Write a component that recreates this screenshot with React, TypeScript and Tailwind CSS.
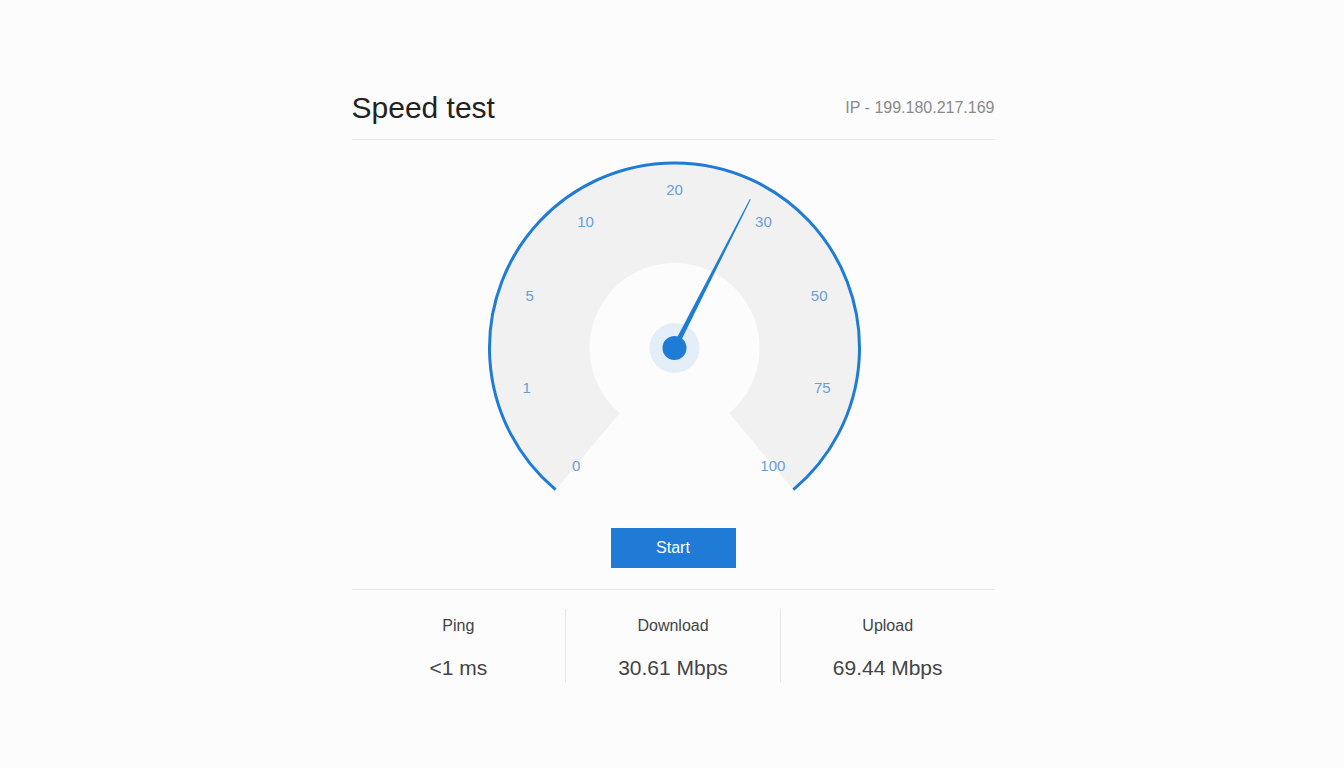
const CX = 322.5;
const CY = 208;
const R_OUT = 185;
const R_IN = 85;

// label radius varies a little: the top one sits higher
const ticks = [
  { t: '0', r: 153 },
  { t: '1', r: 153 },
  { t: '5', r: 154 },
  { t: '10', r: 155 },
  { t: '20', r: 159 },
  { t: '30', r: 155 },
  { t: '50', r: 154 },
  { t: '75', r: 153 },
  { t: '100', r: 153 },
];

function pt(r: number, deg: number) {
  const a = (deg * Math.PI) / 180;
  return { x: CX + r * Math.sin(a), y: CY - r * Math.cos(a) };
}

function Gauge() {
  const o1 = pt(R_OUT, -140);
  const o2 = pt(R_OUT, 140);
  const i1 = pt(R_IN, -140);
  const i2 = pt(R_IN, 140);
  const band = `M ${o1.x} ${o1.y} A ${R_OUT} ${R_OUT} 0 1 1 ${o2.x} ${o2.y} L ${i2.x} ${i2.y} A ${R_IN} ${R_IN} 0 1 0 ${i1.x} ${i1.y} Z`;
  const arc = `M ${o1.x} ${o1.y} A ${R_OUT} ${R_OUT} 0 1 1 ${o2.x} ${o2.y}`;

  return (
    <svg width="643" height="370" viewBox="0 0 643 370" className="block">
      <path d={band} fill="#f1f1f1" />
      <path d={arc} fill="none" stroke="#1e7bd6" strokeWidth="3" />
      {ticks.map((k, i) => {
        const p = pt(k.r, -140 + i * 35);
        return (
          <text
            key={k.t}
            x={p.x}
            y={p.y}
            textAnchor="middle"
            dominantBaseline="central"
            fontSize="15"
            fill="#6a9fd6"
            fontFamily="'Liberation Sans', Arial, sans-serif"
          >
            {k.t}
          </text>
        );
      })}
      <circle cx={CX} cy={CY} r="25" fill="#e4eef9" />
      <g transform={`rotate(27 ${CX} ${CY})`}>
        <polygon
          points={`${CX - 2.6},${CY} ${CX - 0.5},${CY - 167} ${CX + 0.5},${CY - 167} ${CX + 2.6},${CY}`}
          fill="#1e7bd6"
        />
      </g>
      <circle cx={CX} cy={CY} r="12" fill="#1e7bd6" />
    </svg>
  );
}

function Stat({ label, value, first }: { label: string; value: string; first?: boolean }) {
  return (
    <div className={`flex-1 flex flex-col items-center h-[73px] pt-[7px] ${first ? '' : 'border-l border-[#e6e6e6]'}`}>
      <div className="text-[16px] leading-[20px] text-[#444]">{label}</div>
      <div className="mt-[18px] text-[21px] leading-[28px] text-[#444]">{value}</div>
    </div>
  );
}

export default function App() {
  return (
    <div
      className="min-h-screen bg-[#fcfcfc]"
      style={{ fontFamily: "'Liberation Sans', Arial, sans-serif" }}
    >
      <div className="w-[643px] mx-auto pt-[88px] translate-x-[1px]">
        {/* header */}
        <div className="flex justify-between items-center h-[40px] pb-[11px] border-b border-[#e8e8e8] box-content">
          <h1 className="text-[30px] leading-[40px] text-[#222]">Speed test</h1>
          <div className="text-[16px] leading-[40px] text-[#8a8a8a]">IP - 199.180.217.169</div>
        </div>

        <Gauge />

        <div className="flex justify-center mt-[18px]">
          <button className="w-[125px] h-[40px] bg-[#1f7bd5] text-white text-[16px]">Start</button>
        </div>

        <div className="mt-[21px] border-t border-[#e8e8e8] pt-[19px] flex">
          <Stat label="Ping" value="<1 ms" first />
          <Stat label="Download" value="30.61 Mbps" />
          <Stat label="Upload" value="69.44 Mbps" />
        </div>
      </div>
    </div>
  );
}
